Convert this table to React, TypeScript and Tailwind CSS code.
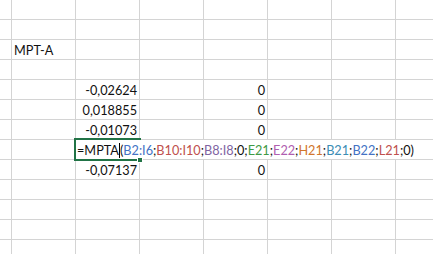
import React from "react";

const G = "border-[#d4d4d4]";

function Cell({ w, children, right, noRight }: { w: string; children?: React.ReactNode; right?: boolean; noRight?: boolean }) {
  return (
    <div
      className={`${w} h-[20px] shrink-0 border-b ${noRight ? "" : "border-r"} ${G} ${right ? "text-right pr-[2px]" : "pl-[2px]"} leading-[21px] whitespace-nowrap overflow-visible`}
    >
      {children}
    </div>
  );
}

type RowData = { a?: string; b?: string; d?: string };

const rows: (RowData | "formula")[] = [
  {},
  {},
  { a: "MPT-A" },
  {},
  { b: "-0,02624", d: "0" },
  { b: "0,018855", d: "0" },
  { b: "-0,01073", d: "0" },
  "formula",
  { b: "-0,07137", d: "0" },
  {},
  {},
  {},
  {},
];

const C = {
  blue: "text-[#4472c4]",
  red: "text-[#c0504d]",
  purple: "text-[#8064a2]",
  green: "text-[#3f9a45]",
  pink: "text-[#b05eb0]",
  orange: "text-[#d1762c]",
  teal: "text-[#3b8db5]",
};

function Formula() {
  return (
    <span className="text-[#111]">
      =MPTA
      <span className="inline-block w-px h-[15px] bg-black align-[-3px]" />
      (<span className={C.blue}>B2:I6</span>;<span className={C.red}>B10:I10</span>;
      <span className={C.purple}>B8:I8</span>;0;<span className={C.green}>E21</span>;
      <span className={C.pink}>E22</span>;<span className={C.orange}>H21</span>;
      <span className={C.teal}>B21</span>;<span className={C.blue}>B22</span>;
      <span className={C.red}>L21</span>;0)
    </span>
  );
}

export default function App() {
  return (
    <div
      className="relative w-[433px] h-[254px] overflow-hidden bg-white text-[12.7px] text-[#111]"
      style={{ fontFamily: "Lato, 'Open Sans', sans-serif" }}
    >
      {rows.map((r, i) =>
        r === "formula" ? (
          <div key={i} className="flex">
            <Cell w="w-[12px]" />
            <Cell w="w-[64px]" />
            <div className={`flex-1 h-[20px] border-b ${G} leading-[21px] whitespace-nowrap pl-[1px]`}>
              <Formula />
            </div>
          </div>
        ) : (
          <div key={i} className="flex">
            <Cell w="w-[12px]" />
            <Cell w="w-[64px]">{r.a}</Cell>
            <Cell w="w-[64px]" right>
              {r.b}
            </Cell>
            <Cell w="w-[64px]" />
            <Cell w="w-[64px]" right>
              {r.d}
            </Cell>
            <Cell w="w-[64px]" />
            <Cell w="w-[64px]" />
            <Cell w="w-[64px]" />
          </div>
        )
      )}
      <div className="absolute left-[74px] top-[138px] w-[67px] h-[23px] border-2 border-r-0 border-[#217346]" />
      <div className="absolute left-[137px] top-[157px] w-[6px] h-[6px] bg-[#217346] border border-white" />
    </div>
  );
}
